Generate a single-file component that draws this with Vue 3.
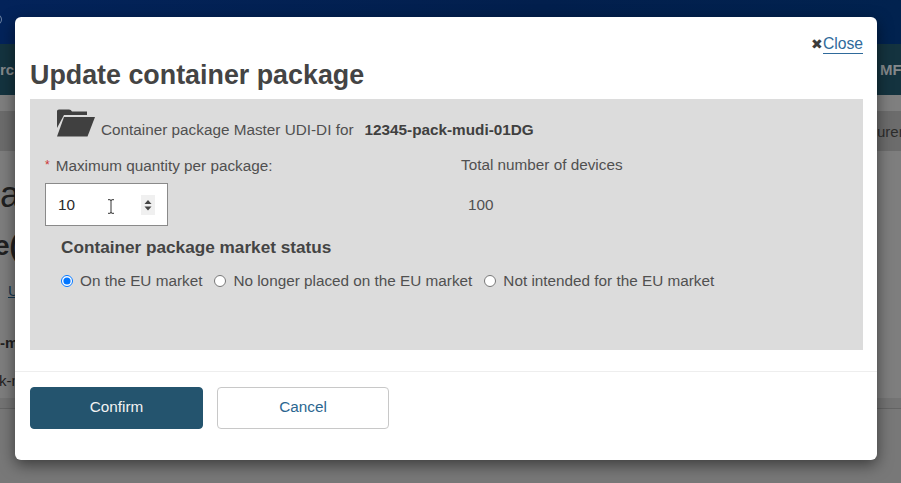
<script setup>
const statuses = [
  { label: 'On the EU market', checked: true },
  { label: 'No longer placed on the EU market', checked: false },
  { label: 'Not intended for the EU market', checked: false }
]
</script>

<template>
  <div class="page">
    <div class="backdrop">
      <div class="top"><span class="dot"></span></div>
      <div class="nav"><span>rch</span><span>MF</span></div>
      <div class="gap"></div>
      <div class="crumbs"><span></span><span>uren</span></div>
      <div class="content">
        <div class="big">a</div>
        <div class="sub">e(s</div>
        <div class="lnk">U</div>
        <div class="b1">-m</div>
        <div class="b2">k-m</div>
      </div>
      <div class="band"></div>
      <div class="foot"></div>
    </div>

    <div class="modal">
      <div class="close-row">
        <span class="x">✖</span><a class="close">Close</a>
      </div>
      <h2>Update container package</h2>
      <div class="panel">
        <div class="master">
          <svg class="folder" viewBox="0 0 38 28" width="38" height="28">
            <path d="M0 2 Q0 .5 2 .5 H12 Q14 .5 15 2.5 H30 V6 H7 L0 19 Z" fill="#404040" />
            <path d="M7 8 H38 L30.5 27.5 H0 Z" fill="#404040" />
          </svg>
          <span class="master-label">Container package Master UDI-DI for</span>
          <strong>12345-pack-mudi-01DG</strong>
        </div>
        <div class="fields">
          <div class="col-a">
            <div class="lab"><span class="req">*</span>Maximum quantity per package:</div>
            <div class="num">
              <input class="num-input" type="text" value="10" readonly />
              <span class="spin">
                <svg viewBox="0 0 14 20" width="14" height="20">
                  <path d="M7 5 L10.5 9 H3.5 Z M7 15.5 L3.5 11.5 H10.5 Z" fill="#444" />
                </svg>
              </span>
              <svg class="beam" viewBox="0 0 8 15" width="8" height="15">
                <path d="M1 .7 H3 Q4 .7 4 2 V13 Q4 14.3 3 14.3 H1 M7 .7 H5 Q4 .7 4 2 M4 13 Q4 14.3 5 14.3 H7" fill="none" stroke="#333" stroke-width="1" />
              </svg>
            </div>
          </div>
          <div class="col-b">
            <div class="total">Total number of devices</div>
            <div class="value">100</div>
          </div>
        </div>
        <h3>Container package market status</h3>
        <div class="radios">
          <label v-for="s in statuses" :key="s.label" class="radio">
            <input type="radio" name="status" :checked="s.checked" />
            <span>{{ s.label }}</span>
          </label>
        </div>
      </div>
      <div class="actions">
        <button class="confirm">Confirm</button>
        <button class="cancel">Cancel</button>
      </div>
    </div>
  </div>
</template>

<style scoped>
.page {
  width: 901px;
  height: 483px;
  overflow: hidden;
  position: relative;
  font-family: "Liberation Sans", Arial, sans-serif;
  background: #7b7b7b;
}
.backdrop {
  display: flex;
  flex-direction: column;
  height: 483px;
}
.top {
  height: 44px;
  flex: none;
  box-sizing: border-box;
  padding-top: 15px;
  background: linear-gradient(90deg, #03235a, #021f4d 60%, #01224f);
  overflow: hidden;
}
.dot {
  display: block;
  width: 8px;
  height: 9px;
  margin-left: -6px;
  border-radius: 50%;
  border: 1px solid #6a80a0;
  box-sizing: border-box;
}
.nav {
  height: 51px;
  flex: none;
  background: #14333f;
  color: #85898c;
  font-weight: 700;
  font-size: 15px;
  display: grid;
  grid-template-columns: 880px 1fr;
  align-items: center;
  overflow: hidden;
}
.gap {
  height: 16px;
  flex: none;
  background: #7f7f7f;
}
.crumbs {
  height: 40px;
  flex: none;
  background: #6c6c6c;
  color: #2c2c2c;
  font-size: 15px;
  display: grid;
  grid-template-columns: 877px 1fr;
  align-items: center;
}
.content {
  height: 247px;
  flex: none;
  background: #7e7e7e;
  color: #202020;
  overflow: hidden;
}
.big {
  font-size: 36px;
  line-height: 40px;
  margin-top: 24px;
}
.sub {
  font-size: 28px;
  font-weight: 700;
  line-height: 32px;
  margin-top: 15px;
  margin-left: -6px;
}
.lnk {
  font-size: 15px;
  color: #12364f;
  text-decoration: underline;
  margin-top: 20px;
  margin-left: 8px;
}
.b1 {
  font-size: 15px;
  font-weight: 700;
  margin-top: 35px;
}
.b2 {
  font-size: 15px;
  margin-top: 21px;
  margin-left: -1px;
}
.band {
  height: 10px;
  flex: none;
  background: #747474;
}
.foot {
  flex: 1;
  background: #787878;
  border-top: 1px solid #646464;
}
.modal {
  position: absolute;
  left: 15px;
  top: 17px;
  width: 862px;
  height: 443px;
  box-sizing: border-box;
  padding: 0 14px 0 15px;
  background: #fff;
  border-radius: 6px;
  box-shadow: 0 5px 15px rgba(0, 0, 0, 0.5);
  display: flex;
  flex-direction: column;
}
.close-row {
  display: flex;
  justify-content: flex-end;
  align-items: baseline;
  height: 38px;
  padding-top: 18px;
  box-sizing: border-box;
  font-size: 15.7px;
  line-height: 18px;
}
.x {
  font-size: 14px;
  color: #3c3c3c;
}
.close {
  color: #2f6a9b;
  border-bottom: 1px solid #2f6a9b;
}
h2 {
  margin: 0;
  height: 44px;
  font-size: 26.85px;
  line-height: 40px;
  font-weight: 700;
  color: #444;
}
.panel {
  height: 251px;
  background: #dcdcdc;
  color: #505050;
  font-size: 15.3px;
  flex: none;
}
.master {
  display: flex;
  align-items: flex-end;
  padding: 10px 0 0 27px;
  height: 28px;
}
.folder {
  flex: none;
}
.master-label {
  margin: 0 0 -2px 6px;
}
.master strong {
  margin: 0 0 -2px 11px;
  color: #404040;
}
.fields {
  display: flex;
  margin-top: 19px;
}
.col-a {
  width: 431px;
  padding-left: 15px;
  box-sizing: border-box;
}
.lab {
  height: 18px;
  line-height: 18px;
}
.req {
  color: #c33;
  margin-right: 6px;
  font-size: 12px;
  vertical-align: 2px;
}
.num {
  position: relative;
  margin-top: 9px;
  width: 123px;
  height: 43px;
  box-sizing: border-box;
  border: 1px solid #8a8a8a;
  background: #fff;
  display: flex;
  align-items: center;
  padding: 0 12px;
}
.num-input {
  flex: 1;
  min-width: 0;
  border: 0;
  padding: 0;
  outline: none;
  background: transparent;
  font: 15.3px "Liberation Sans", Arial, sans-serif;
  color: #2a2a2a;
}
.spin {
  display: flex;
  background: #f0f0f0;
}
.beam {
  position: absolute;
  left: 61px;
  top: 15px;
}
.total {
  height: 18px;
  line-height: 18px;
}
.value {
  margin-top: 22px;
  margin-left: 7px;
  line-height: 18px;
}
h3 {
  margin: 10px 0 0 31px;
  font-size: 17.2px;
  line-height: 22px;
  font-weight: 700;
  color: #444;
}
.radios {
  display: flex;
  gap: 12px;
  margin: 14px 0 0 31px;
}
.radio {
  display: flex;
  align-items: center;
  gap: 7px;
  line-height: 18px;
}
.radio input {
  margin: 0;
  width: 12px;
  height: 12px;
}
.actions {
  margin: 21px -14px 0 -15px;
  padding: 15px 15px 0;
  border-top: 1px solid #eee;
  display: flex;
  gap: 14px;
}
.actions button {
  height: 42px;
  border-radius: 4px;
  font: 15.3px "Liberation Sans", Arial, sans-serif;
  padding: 0 0 2px;
}
.confirm {
  width: 173px;
  background: #24546e;
  color: #f2f2f2;
  border: 1px solid #24546e;
}
.cancel {
  width: 172px;
  background: #fff;
  color: #2b6690;
  border: 1px solid #c8c8c8;
}
</style>
